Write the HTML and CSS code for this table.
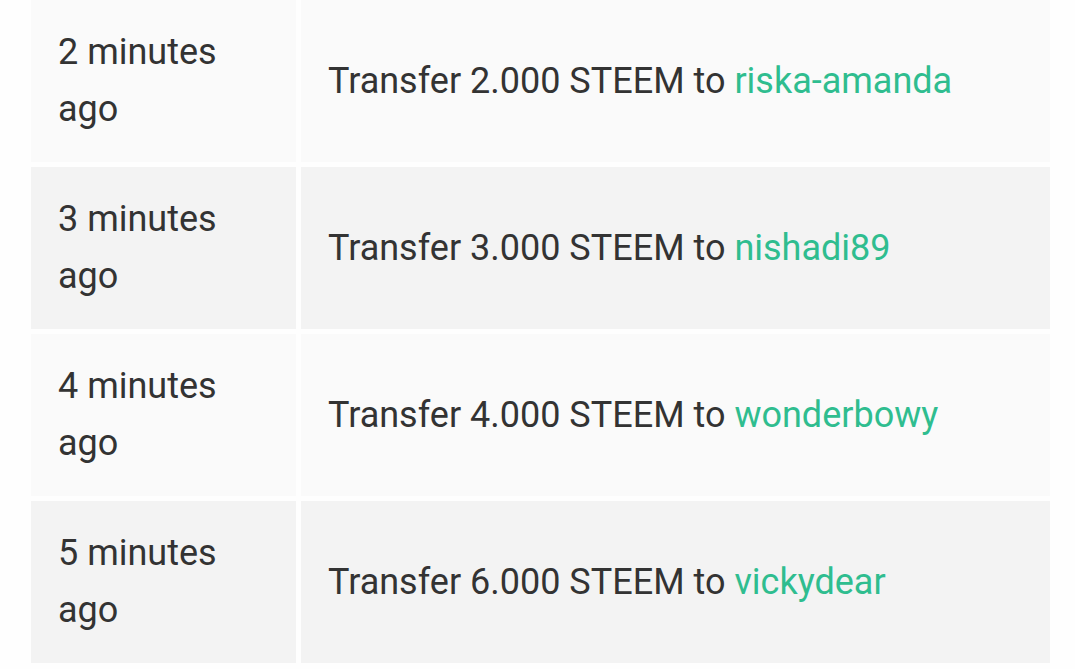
FILE: index.html
```html
<!DOCTYPE html>
<html lang="en">
<head>
    <meta charset="UTF-8">
    <meta name="viewport" content="width=device-width, initial-scale=1.0">
    <title>Transfers</title>
    <link rel="stylesheet" href="styles.css">
</head>
<body>
    <table class="history">
        <tr>
            <td class="time">2 minutes ago</td>
            <td class="op">Transfer 2.000 STEEM to <a href="#">riska-amanda</a></td>
        </tr>
        <tr>
            <td class="time">3 minutes ago</td>
            <td class="op">Transfer 3.000 STEEM to <a href="#">nishadi89</a></td>
        </tr>
        <tr>
            <td class="time">4 minutes ago</td>
            <td class="op">Transfer 4.000 STEEM to <a href="#">wonderbowy</a></td>
        </tr>
        <tr>
            <td class="time">5 minutes ago</td>
            <td class="op">Transfer 6.000 STEEM to <a href="#">vickydear</a></td>
        </tr>
    </table>
</body>
</html>
```

FILE: styles.css
```css
body {
    background: #fefefe;
    font-family: Roboto, "Noto Sans", sans-serif;
    color: #333;
    margin: 0;
}
.history {
    border-collapse: separate;
    border-spacing: 5px;
    margin: -5px 0 0 26px;
    font-size: 36px;
    line-height: 57px;
}
.history td {
    height: 162px;
    padding: 0 27px;
    box-sizing: border-box;
    vertical-align: middle;
}
.history tr:nth-child(odd) td {
    background: #fafafa;
}
.history tr:nth-child(even) td {
    background: #f3f3f3;
}
.time {
    width: 265px;
}
.op {
    width: 749px;
}
.op a {
    color: #2fbd8f;
    text-decoration: none;
}
```
